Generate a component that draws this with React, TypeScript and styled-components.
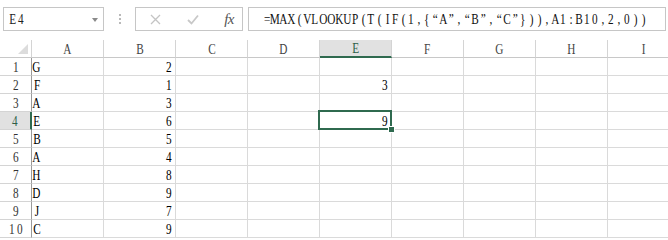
import styled, { createGlobalStyle } from 'styled-components';

const COLUMNS = ['A', 'B', 'C', 'D', 'E', 'F', 'G', 'H', 'I'];

const FORMULA = '=MAX(VLOOKUP(T(IF(1,{“A”,“B”,“C”})),A1:B10,2,0))';

const DATA: Record<number, Record<string, string>> = {
  1: { A: 'G', B: '2' },
  2: { A: 'F', B: '1', E: '3' },
  3: { A: 'A', B: '3' },
  4: { A: 'E', B: '6', E: '9' },
  5: { A: 'B', B: '5' },
  6: { A: 'A', B: '4' },
  7: { A: 'H', B: '8' },
  8: { A: 'D', B: '9' },
  9: { A: 'J', B: '7' },
  10: { A: 'C', B: '9' },
};

const ACTIVE_COL = 'E';
const ACTIVE_ROW = 4;

const isNumber = (v: string) => /^-?\d+(\.\d+)?$/.test(v);

// SimSun-like look: serif glyphs squeezed into fixed-width boxes
function Mono({ text, w = 7.5 }: { text: string; w?: number }) {
  return (
    <>
      {[...text].map((ch, i) => (
        <CharBox key={i} $w={w}>
          <Glyph>{ch}</Glyph>
        </CharBox>
      ))}
    </>
  );
}

function App() {
  const rows = Array.from({ length: 10 }, (_, i) => i + 1);
  return (
    <>
      <GlobalStyle />
      <Page>
        <FormulaBar>
          <NameBox>
            <NameText>
              <Mono text="E4" />
            </NameText>
            <DropArrow />
          </NameBox>
          <Grip>
            <Dot />
            <Dot />
            <Dot />
          </Grip>
          <ActionBox>
            <ActionIcon>
              <svg width="11" height="11" viewBox="0 0 11 11">
                <path d="M1 1 L10 10 M10 1 L1 10" stroke="#c4c4c4" strokeWidth="1.3" fill="none" />
              </svg>
            </ActionIcon>
            <ActionIcon>
              <svg width="12" height="11" viewBox="0 0 12 11">
                <path d="M1 6 L4.5 9.5 L11 1.5" stroke="#c8c8c8" strokeWidth="1.8" fill="none" />
              </svg>
            </ActionIcon>
            <FxLabel>fx</FxLabel>
          </ActionBox>
          <FormulaInput>
            <Mono text={FORMULA} w={8} />
          </FormulaInput>
        </FormulaBar>

        <Sheet>
          <Corner>
            <CornerTriangle />
          </Corner>
          {COLUMNS.map((c) => (
            <ColHeader key={c} $active={c === ACTIVE_COL}>
              <Mono text={c} />
            </ColHeader>
          ))}
          {rows.map((r) => (
            <Row key={r} r={r} />
          ))}
        </Sheet>
      </Page>
    </>
  );
}

function Row({ r }: { r: number }) {
  return (
    <>
      <RowHeader $active={r === ACTIVE_ROW}>
        <Mono text={String(r)} />
      </RowHeader>
      {COLUMNS.map((c) => {
        const v = DATA[r]?.[c] ?? '';
        const selected = r === ACTIVE_ROW && c === ACTIVE_COL;
        return (
          <Cell key={c} $num={isNumber(v)} $selected={selected}>
            <Mono text={v} />
            {selected && <FillHandle />}
          </Cell>
        );
      })}
    </>
  );
}

export default App;

const GlobalStyle = createGlobalStyle`
  html, body {
    margin: 0;
    padding: 0;
    background: #ffffff;
    overflow: hidden;
  }
`;

const Page = styled.div`
  width: 668px;
  height: 240px;
  overflow: hidden;
  font-family: 'Liberation Serif', 'DejaVu Serif', serif;
  font-size: 15px;
  color: #000;
`;

const CharBox = styled.span<{ $w: number }>`
  display: inline-flex;
  justify-content: center;
  width: ${(p) => p.$w}px;
  white-space: pre;
`;

const Glyph = styled.span`
  display: inline-block;
  transform: scaleX(0.75);
  padding-top: 1px;
`;

const FormulaBar = styled.div`
  display: flex;
  align-items: center;
  height: 24px;
  padding: 7px 0 9px 3px;
`;

const NameBox = styled.div`
  box-sizing: border-box;
  width: 101px;
  height: 24px;
  border: 1px solid #c6c6c6;
  display: flex;
  align-items: center;
  justify-content: space-between;
  padding: 0 5px 0 5px;
`;

const NameText = styled.span`
  display: flex;
  color: #222;
`;

const DropArrow = styled.span`
  width: 0;
  height: 0;
  border-left: 3.5px solid transparent;
  border-right: 3.5px solid transparent;
  border-top: 4px solid #8a8a8a;
  margin-top: 1px;
`;

const Grip = styled.div`
  width: 31px;
  display: flex;
  flex-direction: column;
  align-items: center;
  gap: 2px;
`;

const Dot = styled.span`
  width: 2px;
  height: 2px;
  background: #b9b9b9;
`;

const ActionBox = styled.div`
  box-sizing: border-box;
  width: 108px;
  height: 24px;
  border: 1px solid #c6c6c6;
  display: flex;
  align-items: center;
  justify-content: space-between;
  padding: 0 8px 0 12px;
`;

const ActionIcon = styled.span`
  display: flex;
  width: 14px;
  justify-content: center;
`;

const FxLabel = styled.span`
  font-style: italic;
  font-size: 15px;
  color: #555;
  letter-spacing: -0.5px;
`;

const FormulaInput = styled.div`
  box-sizing: border-box;
  margin-left: 5px;
  width: 418px;
  height: 24px;
  border: 1px solid #c6c6c6;
  padding: 0 0 0 14px;
  display: flex;
  align-items: center;
  white-space: nowrap;
  color: #111;
`;

const Sheet = styled.div`
  display: grid;
  grid-template-columns: 32px repeat(9, 72px);
  grid-auto-rows: 18px;
`;

const Corner = styled.div`
  border-right: 1px solid #d4d4d4;
  border-bottom: 1px solid #c8c8c8;
  display: flex;
  align-items: flex-end;
  justify-content: flex-end;
  padding: 0 3px 3px 0;
`;

const CornerTriangle = styled.span`
  width: 0;
  height: 0;
  border-left: 10px solid transparent;
  border-bottom: 10px solid #dcdcdc;
`;

const ColHeader = styled.div<{ $active?: boolean }>`
  box-sizing: border-box;
  display: flex;
  align-items: center;
  justify-content: center;
  color: ${(p) => (p.$active ? '#2e5e48' : '#444')};
  background: ${(p) => (p.$active ? '#e1e1e1' : '#fff')};
  border-right: 1px solid #d4d4d4;
  border-bottom: ${(p) => (p.$active ? '2px solid #2f6a4f' : '1px solid #c8c8c8')};
`;

const RowHeader = styled.div<{ $active?: boolean }>`
  box-sizing: border-box;
  display: flex;
  align-items: center;
  justify-content: center;
  color: ${(p) => (p.$active ? '#2e5e48' : '#333')};
  background: ${(p) => (p.$active ? '#e1e1e1' : '#fff')};
  border-right: ${(p) => (p.$active ? '2px solid #2f6a4f' : '1px solid #9a9a9a')};
  border-bottom: 1px solid #d4d4d4;
`;

const Cell = styled.div<{ $num?: boolean; $selected?: boolean }>`
  box-sizing: border-box;
  position: relative;
  display: flex;
  align-items: center;
  justify-content: ${(p) => (p.$num ? 'flex-end' : 'flex-start')};
  padding: 0 ${(p) => (p.$num ? '3px' : '2px')} 0 1px;
  border-right: 1px solid #dadada;
  border-bottom: 1px solid #dadada;

  ${(p) =>
    p.$selected &&
    `
    &::after {
      content: '';
      position: absolute;
      top: -2px;
      left: -2px;
      right: -1px;
      bottom: -1px;
      border: 2px solid #2f6a4f;
      pointer-events: none;
    }
  `}
`;

const FillHandle = styled.span`
  position: absolute;
  right: -4px;
  bottom: -4px;
  width: 5px;
  height: 5px;
  background: #2f6a4f;
  border: 1px solid #fff;
  z-index: 2;
`;
